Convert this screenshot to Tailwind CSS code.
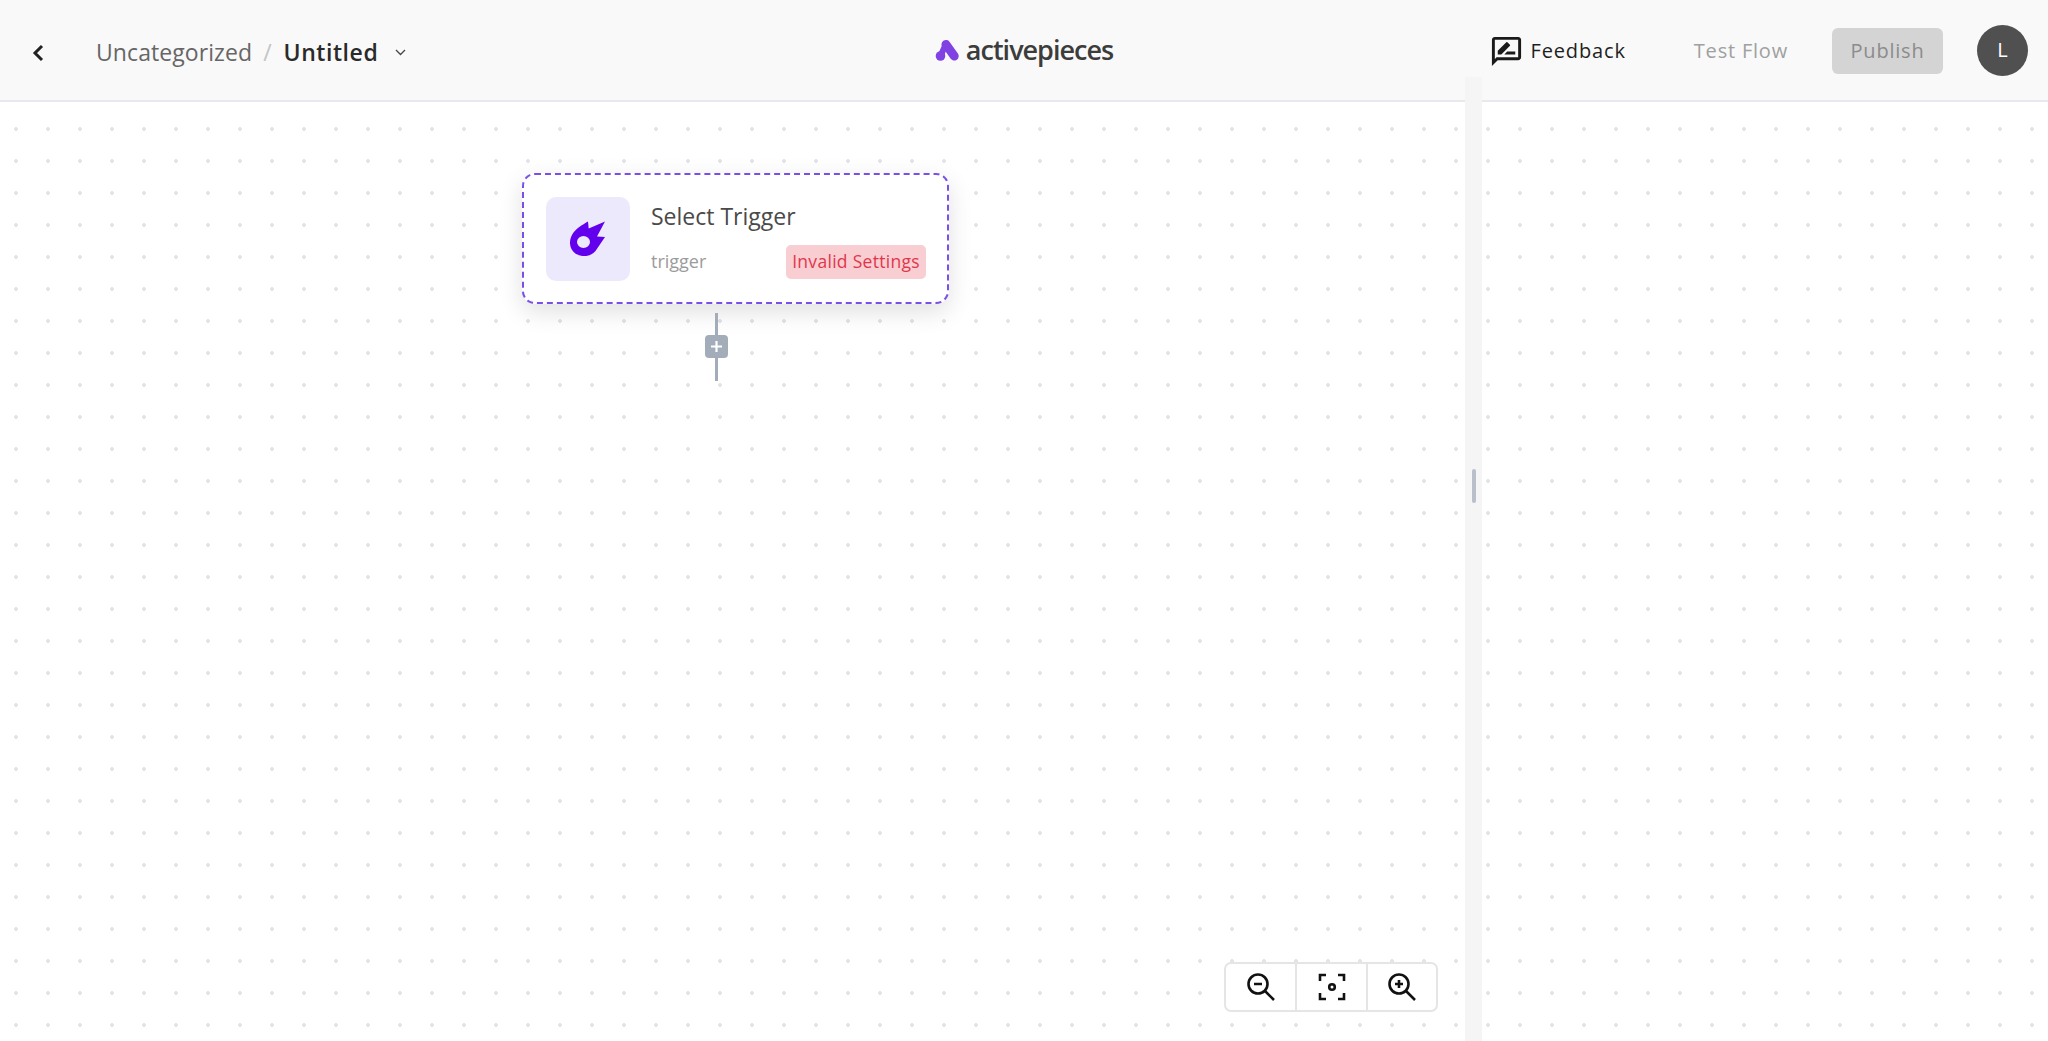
<!DOCTYPE html>
<html lang="en">

<head>
  <meta charset="UTF-8" />
  <title>Untitled - Activepieces</title>
  <script src="https://cdn.jsdelivr.net/npm/@tailwindcss/browser@4"></script>
</head>

<body class="bg-white font-['Open_Sans',sans-serif]">
  <div class="relative flex flex-col h-[1041px] w-[2048px] overflow-hidden">
    <!-- top bar -->
    <header class="grid grid-cols-[1fr_auto_1fr] items-center h-[102px] bg-[#f9f9f9] border-b-2 border-[#e8e8ef]">
      <div class="flex items-center pl-[32px] pt-[5px]">
        <svg class="w-[12px] h-[18px]" viewBox="0 0 12 18" fill="none" stroke="#222222" stroke-width="3">
          <path d="M10 2L3 9l7 7" />
        </svg>
        <span class="ml-[52px] text-[23px] tracking-[0.08px] text-[#666666]">Uncategorized</span>
        <span class="ml-[11px] text-[23px] text-[#c4c4c4]">/</span>
        <span class="ml-[12px] text-[23px] font-semibold tracking-[0.55px] text-[#2a2a2a]">Untitled</span>
        <svg class="ml-[17px] w-[11px] h-[7px]" viewBox="0 0 11 7" fill="none" stroke="#444444" stroke-width="1.3">
          <path d="M1 1l4.5 4.5L10 1" />
        </svg>
      </div>
      <div class="flex items-center gap-[7px]">
        <svg class="w-[24px] h-[22px]" viewBox="0 0 24 22" fill="none" stroke="#8142e3" stroke-linecap="round">
          <path d="M11 5.5L19.2 17" stroke-width="9" />
          <path d="M10 7L6 16" stroke-width="6" />
          <circle cx="5.5" cy="17" r="4.8" fill="#8142e3" stroke="none" />
        </svg>
        <span class="text-[27px] font-semibold tracking-[-1px] text-[#3c3c3c]">activepieces</span>
      </div>
      <div class="flex items-center justify-end pr-[20px]">
        <svg class="mt-[2px] w-[35px] h-[35px]" viewBox="0 0 24 24" fill="#1a1a1a">
          <path d="M20 2H4c-1.1 0-1.99.9-1.99 2L2 22l4-4h14c1.1 0 2-.9 2-2V4c0-1.1-.9-2-2-2zm0 14H5.17l-.59.59-.58.58V4h16v12zm-9.5-2H18v-2h-5.5zm3.86-5.87c.2-.2.2-.51 0-.71l-1.77-1.77c-.2-.2-.51-.2-.71 0L6 11.53V14h2.47l5.89-5.87z" />
        </svg>
        <span class="mt-[2px] ml-[7px] text-[20px] tracking-[0.85px] text-[#1f1f1f]">Feedback</span>
        <span class="mt-[2px] ml-[68px] text-[20px] tracking-[0.8px] text-[#a0a0a0]">Test Flow</span>
        <button class="mt-[2px] ml-[44px] w-[111px] h-[46px] rounded-[6px] bg-[#d4d4d4] text-[20px] tracking-[0.8px] text-[#8c8c8c]">Publish</button>
        <div class="ml-[34px] flex items-center justify-center w-[51px] h-[51px] rounded-full bg-[#505050] text-[20px] text-white">L</div>
      </div>
    </header>

    <!-- flow canvas -->
    <main class="relative flex-1 bg-[radial-gradient(circle,#e2e4ea_1.6px,transparent_2.2px)] bg-[length:32px_32px] bg-[position:0_11px]">
      <!-- trigger node -->
      <div class="absolute left-[522px] top-[71px] flex items-center w-[427px] h-[131px] pl-[22px] pr-[21px] pt-[2px] bg-white border-2 border-dashed border-[#7a4fe8] rounded-[13px] shadow-[0_8px_24px_rgba(0,0,0,0.12)]">
        <div class="-mt-[2px] flex items-center justify-center shrink-0 w-[84px] h-[84px] rounded-[10px] bg-[#ede9fc]">
          <svg class="w-[36px] h-[36px]" viewBox="0 0 36 36" fill="#6200ee" fill-rule="evenodd">
            <path d="M18 .5L18.7 7.5 35 .5 27 15.5 35 16 25.5 30C21 35.5 13 36.5 6 33-1 28-1.5 20 2.5 13 6 7.5 12 4 18 .5ZM7 21a6.5 6 0 1 0 13 0a6.5 6 0 1 0-13 0Z" />
          </svg>
        </div>
        <div class="flex-1 ml-[21px]">
          <div class="text-[23px] text-[#4a4a4a] leading-[30px]">Select Trigger</div>
          <div class="flex items-center justify-between mt-[14px]">
            <span class="text-[18px] text-[#9b9b9b]">trigger</span>
            <span class="flex items-center h-[34px] px-[6px] rounded-[5px] bg-[#f8ced2] text-[17.5px] tracking-[0.3px] text-[#e0364c]">Invalid Settings</span>
          </div>
        </div>
      </div>

      <!-- connector with add button -->
      <div class="absolute left-[715px] top-[211px] w-[3px] h-[68px] bg-[#a3adba]"></div>
      <div class="absolute left-[705px] top-[233px] flex items-center justify-center w-[23px] h-[23px] rounded-[4px] bg-[#a3adba]">
        <svg class="w-[13px] h-[13px]" viewBox="0 0 13 13" stroke="#ffffff" stroke-width="2.2">
          <path d="M6.5 1v11M1 6.5h11" />
        </svg>
      </div>

      <!-- zoom controls -->
      <div class="absolute left-[1224px] top-[860px] flex w-[214px] h-[50px] bg-white border-2 border-[#e5e5e5] rounded-[7px]">
        <button class="flex items-center justify-center w-[71px] border-r-2 border-[#e5e5e5]">
          <svg class="w-[32px] h-[32px]" viewBox="0 0 32 32" fill="none" stroke="#111111" stroke-width="2.6">
            <circle cx="13" cy="13" r="9.5" />
            <path d="M20 20l9 9M9 13h8" />
          </svg>
        </button>
        <button class="flex items-center justify-center w-[71px] border-r-2 border-[#e5e5e5]">
          <svg class="w-[30px] h-[30px]" viewBox="0 0 30 30" fill="none" stroke="#111111" stroke-width="2.6">
            <path d="M9 3H3v6M21 3h6v6M9 27H3v-6M21 27h6v-6" />
            <circle cx="15" cy="15" r="2.8" />
          </svg>
        </button>
        <button class="flex items-center justify-center flex-1">
          <svg class="w-[32px] h-[32px]" viewBox="0 0 32 32" fill="none" stroke="#111111" stroke-width="2.6">
            <circle cx="13" cy="13" r="9.5" />
            <path d="M20 20l9 9M9 13h8M13 9v8" />
          </svg>
        </button>
      </div>
    </main>

    <!-- panel splitter, runs up over the top bar -->
    <div class="absolute left-[1465px] top-[77px] bottom-0 flex items-center w-[17px] bg-[#f5f5f5]">
      <div class="absolute left-[7px] top-[392px] w-[4px] h-[34px] rounded-[2px] bg-[#b9c0cc]"></div>
    </div>
  </div>
</body>

</html>
